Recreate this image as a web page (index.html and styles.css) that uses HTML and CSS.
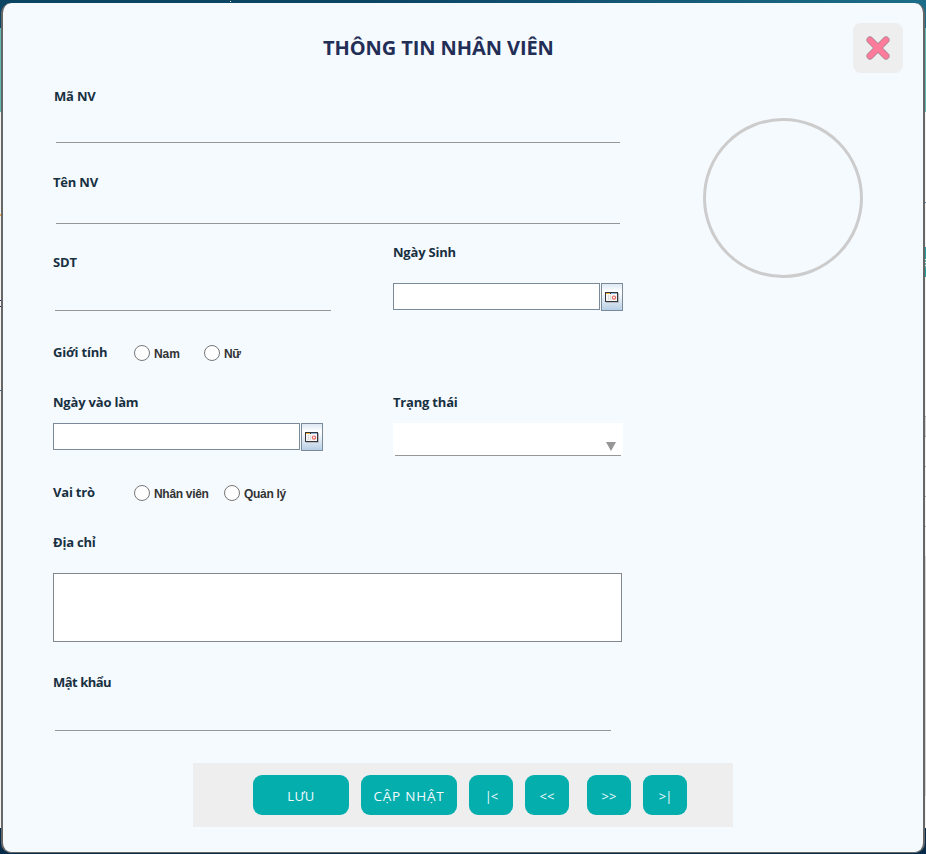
FILE: index.html
```html
<!DOCTYPE html>
<html lang="vi">
<head>
<meta charset="utf-8">
<title>Thông tin nhân viên</title>
<link rel="stylesheet" href="styles.css">
</head>
<body>
<svg width="0" height="0" class="defs">
  <symbol id="calendar" viewBox="0 0 14 12">
    <path d="M1 2h13v10H1z" fill="#b7b9c0"/>
    <path d="M0 1h13v10H0z" fill="#34363c"/>
    <path d="M1 3h11v7H1z" fill="#f8f6f4"/>
    <path d="M1 2h4v1H1z" fill="#f5b43c"/>
    <path d="M6 2h6v1H6z" fill="#8db9e0"/>
    <path d="M3.5 4v5M5.5 4v5" stroke="#dcdcdc" stroke-width="1"/>
    <circle cx="9" cy="6.6" r="1.6" fill="#fff" stroke="#e56460" stroke-width="1.2"/>
  </symbol>
</svg>
<main class="dialog">
  <header class="header">
    <h1 class="title">THÔNG TIN NHÂN VIÊN</h1>
    <button class="close" aria-label="Đóng">
      <svg width="24" height="24" viewBox="0 0 24 24">
        <path d="M4 4 20 20M20 4 4 20" stroke="#a3828e" stroke-width="7" stroke-linecap="round"/>
        <path d="M4 4 20 20M20 4 4 20" stroke="#ff7b9c" stroke-width="5.6" stroke-linecap="round"/>
      </svg>
    </button>
  </header>
  <div class="body">
    <form class="form">
      <div class="row row-code"><div class="label w-code">Mã NV</div><div class="line"></div></div>
      <div class="row row-name"><div class="label">Tên NV</div><div class="line"></div></div>
      <div class="row split row-phone">
        <div class="phone"><div class="label">SDT</div><div class="line line-phone"></div></div>
        <div class="birth">
          <div class="label">Ngày Sinh</div>
          <div class="date"><div class="date-input"></div><div class="date-button"><svg width="14" height="12"><use href="#calendar"/></svg></div></div>
        </div>
      </div>
      <div class="row choices row-short">
        <div class="label">Giới tính</div>
        <div class="choice choice-male"><i class="radio"></i><span>Nam</span></div>
        <div class="choice"><i class="radio"></i><span>Nữ</span></div>
      </div>
      <div class="row split row-start">
        <div class="start">
          <div class="label">Ngày vào làm</div>
          <div class="date"><div class="date-input"></div><div class="date-button"><svg width="14" height="12"><use href="#calendar"/></svg></div></div>
        </div>
        <div class="status">
          <div class="label">Trạng thái</div>
          <div class="combo"><svg width="10" height="9" viewBox="0 0 10 9"><path d="M0 0h10L5 9z" fill="#969696"/></svg></div>
        </div>
      </div>
      <div class="row choices row-short">
        <div class="label">Vai trò</div>
        <div class="choice choice-staff"><i class="radio"></i><span>Nhân viên</span></div>
        <div class="choice"><i class="radio"></i><span>Quản lý</span></div>
      </div>
      <div class="row row-address"><div class="label">Địa chỉ</div><div class="area"></div></div>
      <div class="row row-password"><div class="label tight">Mật khẩu</div><div class="line line-password"></div></div>
    </form>
    <div class="avatar"></div>
  </div>
  <footer class="actions">
    <button class="btn wide">LƯU</button>
    <button class="btn wide update">CẬP NHẬT</button>
    <button class="btn edge">|&lt;</button>
    <button class="btn previous">&lt;&lt;</button>
    <button class="btn">&gt;&gt;</button>
    <button class="btn edge">&gt;|</button>
  </footer>
</main>
</body>
</html>
```
FILE: styles.css
```css
* { box-sizing: border-box; }
body {
  margin: 0;
  width: 926px;
  height: 854px;
  padding: 3px 1px 1px;
  overflow: hidden;
  background:
    linear-gradient(#ffffff, #ffffff) 230px 1px / 1px 1px no-repeat,
    linear-gradient(#f3a54a, #f3a54a) 0 214px / 1px 2px no-repeat,
    linear-gradient(#29275d, #29275d) 0 300px / 1px 1px no-repeat,
    linear-gradient(#29275d, #29275d) 0 306px / 1px 1px no-repeat,
    linear-gradient(#2d659b, #2d659b) 0 390px / 1px 1px no-repeat,
    linear-gradient(#527a96, #527a96) 925px 202px / 1px 1px no-repeat,
    linear-gradient(#21a6a6, #21a6a6) 925px 247px / 1px 12px no-repeat,
    repeating-linear-gradient(#e5f4f4 0 1px, #5fa5a2 1px 3px) 925px 259px / 1px 9px no-repeat,
    linear-gradient(#21a6a6, #21a6a6) 925px 268px / 1px 9px no-repeat,
    linear-gradient(#777, #d5d5d5 5% 95%, #777) 925px 416px / 1px 21px no-repeat,
    linear-gradient(#aaa, #aaa) 925px 466px / 1px 1px no-repeat,
    linear-gradient(#aaa, #aaa) 925px 496px / 1px 1px no-repeat,
    linear-gradient(#aaa, #aaa) 925px 526px / 1px 1px no-repeat,
    linear-gradient(#d5d5d5, #d5d5d5) 925px 556px / 1px 240px no-repeat,
    linear-gradient(90deg, #0c4464, #0c4464 40%, #1c6d89) 0 0 / 926px 28px no-repeat,
    linear-gradient(#63bbb5, #63bbb5) 0 28px / 926px 84px no-repeat,
    linear-gradient(#062b4a, #062b4a) 0 828px / 926px 26px no-repeat,
    #f3f3f3;
  font-family: "Open Sans", "Noto Sans", sans-serif;
}
.defs { display: block; position: absolute; }
.dialog {
  width: 924px;
  height: 850px;
  background: #f5faff;
  border: solid #666;
  border-width: 0 2px 1px;
  border-radius: 10px;
}
.header {
  height: 84px;
  display: flex;
  align-items: flex-start;
  justify-content: space-between;
  padding: 20px 20px 0 320px;
}
.title {
  margin: 0;
  font-size: 20px;
  line-height: 50px;
  font-weight: 700;
  letter-spacing: -0.08px;
  color: #232e57;
  white-space: nowrap;
}
.close {
  width: 50px;
  height: 50px;
  padding: 0;
  border: 0;
  border-radius: 8px;
  background: #eee;
  display: grid;
  place-items: center;
}
.close svg { fill: none; }
.body { display: flex; padding-left: 50px; height: 676px; }
.form { width: 570px; }
.avatar {
  width: 160px;
  height: 160px;
  margin: 31px 0 0 80px;
  border: 3px solid #ccc;
  border-radius: 50%;
}
.label {
  height: 18px;
  line-height: 18px;
  font-size: 13px;
  font-weight: 700;
  letter-spacing: -0.2px;
  color: #18303f;
  white-space: nowrap;
}
.tight { letter-spacing: -0.5px; }
.w-code { padding-left: 1px; }
.line { height: 1px; width: 564px; margin-left: 3px; background: #969696; }
.row-code { height: 86px; }
.row-code .line { margin-top: 37px; }
.row-name { height: 70px; }
.row-name .line { margin-top: 32px; }
.split { display: grid; grid-template-columns: 340px 230px; }
.row-phone { height: 100px; }
.phone { padding-top: 10px; }
.line-phone { width: 276px; margin: 39px 0 0 2px; }
.row-short { height: 50px; }
.row-start { height: 90px; }
.row-address { height: 140px; }
.row-password { height: 89px; }
.line-password { width: 556px; margin: 39px 0 0 2px; }
.date { display: flex; gap: 1px; height: 28px; }
.birth .date { width: 230px; margin-top: 22px; }
.start .date { width: 270px; margin-top: 12px; }
.date-input { flex: 1; height: 27px; border: 1px solid #7a8a99; background: #fff; }
.date-button {
  width: 22px;
  height: 28px;
  border: 1px solid #7a8a99;
  background: linear-gradient(#dde8f3, #fff 30%, #b8cfe5);
  display: grid;
  place-items: center;
}
.combo {
  height: 33px;
  width: 230px;
  margin-top: 12px;
  display: flex;
  justify-content: flex-end;
  align-items: flex-end;
  padding: 0 7px 5px;
  background: linear-gradient(#969696, #969696) 2px 32px / 226px 1px no-repeat, #fff;
}
.area { width: 569px; height: 69px; margin-top: 22px; border: 1px solid #828790; background: #fff; }
.choices { display: flex; }
.choices .label { width: 81px; }
.choice {
  display: flex;
  align-items: center;
  gap: 4px;
  height: 20px;
  font: bold 12px "Liberation Sans", Arial, sans-serif;
  letter-spacing: -0.3px;
  color: #333;
  white-space: nowrap;
}
.choice span { padding-top: 1px; }
.choice-male { width: 70px; letter-spacing: -0.1px; }
.choice-staff { width: 90px; }
.radio { width: 16px; height: 16px; border: 1px solid #777; border-radius: 50%; background: #fff; }
.actions {
  width: 540px;
  height: 64px;
  margin-left: 190px;
  padding: 12px 0 0 60px;
  display: flex;
  gap: 12px;
  background: #eee;
}
.btn {
  width: 44px;
  height: 40px;
  padding: 2px 0 0;
  border: 0;
  border-radius: 9px;
  background: #03aead;
  color: #f5faff;
  font: 13px "Open Sans", "Noto Sans", sans-serif;
  white-space: nowrap;
}
.wide { width: 96px; letter-spacing: 0.4px; }
.update { font-size: 13.5px; letter-spacing: 0.8px; }
.edge { letter-spacing: -1px; }
.previous { margin-right: 6px; }
```
